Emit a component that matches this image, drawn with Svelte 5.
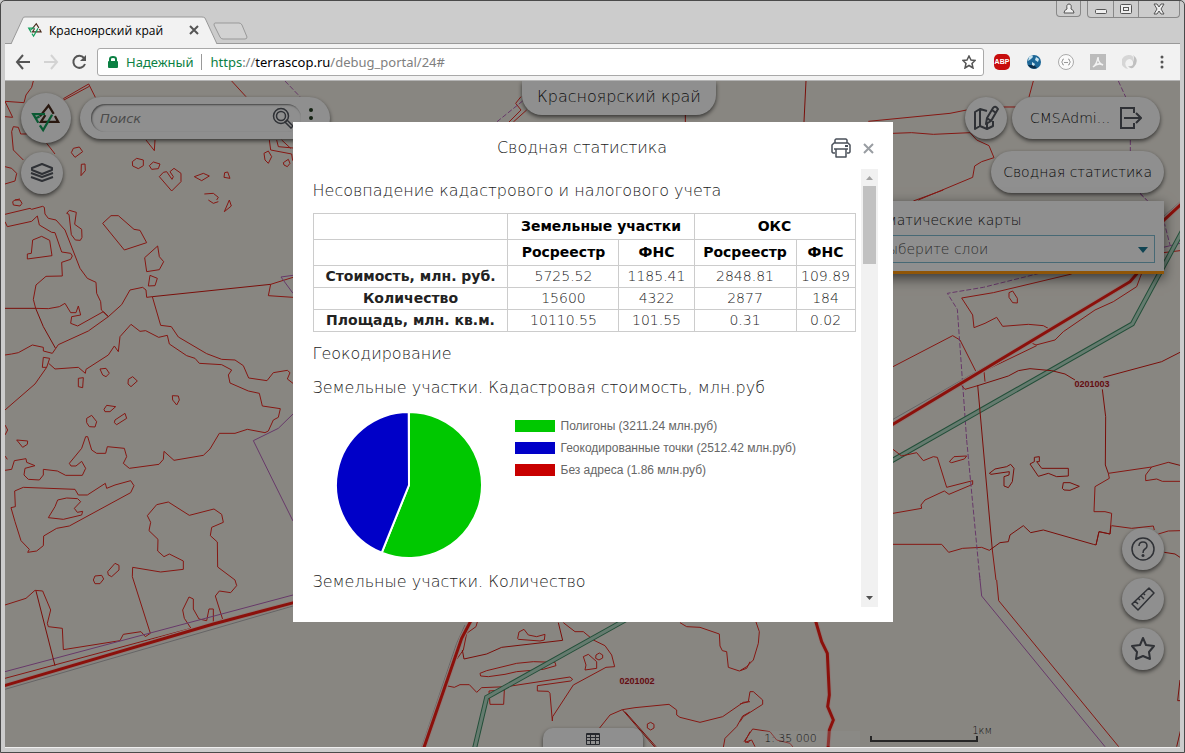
<script>
  const groups = [
    { title: "Земельные участки", cols: ["Росреестр", "ФНС"] },
    { title: "ОКС", cols: ["Росреестр", "ФНС"] }
  ];

  const rows = [
    { name: "Стоимость, млн. руб.", values: ["5725.52", "1185.41", "2848.81", "109.89"] },
    { name: "Количество", values: ["15600", "4322", "2877", "184"] },
    { name: "Площадь, млн. кв.м.", values: ["10110.55", "101.55", "0.31", "0.02"] }
  ];

  const parts = [
    { label: "Полигоны", value: 3211.24, color: "#00c800" },
    { label: "Геокодированные точки", value: 2512.42, color: "#0000c8" },
    { label: "Без адреса", value: 1.86, color: "#c80000" }
  ];

  const total = parts.reduce((sum, p) => sum + p.value, 0);

  function slice(index) {
    const before = parts.slice(0, index).reduce((sum, p) => sum + p.value, 0);
    const a = (before / total) * Math.PI * 2;
    const b = ((before + parts[index].value) / total) * Math.PI * 2;
    const large = b - a > Math.PI ? 1 : 0;
    const point = (t) => `${73 + 73 * Math.sin(t)} ${73 - 73 * Math.cos(t)}`;
    return `M73 73L${point(a)}A73 73 0 ${large} 1 ${point(b)}Z`;
  }

  // Cadastre lines, in thirds of a pixel from each tile's corner
  const tiles = [
    {
      x: 0,
      y: 0,
      thin: "M100 243L95 262L78 285L72 308L15 304L38 352L15 350M190 301L268 259M190 296L266 252L286 292M80 402L62 402L55 382L40 380L35 395L40 450L70 480M140 430L165 462M220 445L238 441L248 455L225 472L214 458ZM244 493L255 492L256 512L243 527ZM15 500L35 505L50 520L45 543L15 552M45 600L60 597M695 243L738 290M438 420L463 452L465 420M397 485L410 475L430 480L430 497L415 506L398 498ZM448 497L460 486L480 492L475 506L455 508ZM478 530L490 517L500 515L516 538L520 530L510 515L522 505L543 520L543 545L515 573ZM583 530L610 520L628 528L605 542ZM672 532L674 518L683 516L690 535ZM613 582L640 580L655 592L650 600M808 420L812 450L875 462L878 482M830 420L835 440L879 444M845 420L872 445M792 460L805 453L815 470L805 490L795 480ZM850 488L865 478L870 490L862 500L852 495Z",
      dash: "M855 243L900 290"
    },
    {
      x: 395,
      y: 0,
      thin: "M378 290L362 310L378 330L342 366M395 330L355 366",
      dark: "M871 345V366",
      dash: "M383 303L305 366"
    },
    {
      x: 790,
      y: 0,
      thin: "M235 364L480 340L530 330M640 321H685M730 243L717 291M309 400L365 398L430 403L540 398L560 420L597 437L612 473L575 485L554 498L548 532L385 600",
      dark: "M48 243L42 366",
      dash: "M985 243L1007 291M1021 420V455M1050 580L1070 600"
    },
    {
      x: 0,
      y: 200,
      thin: "M38 5L45 0L60 0L66 10L60 18L40 15ZM15 43L90 25L95 28L128 19L133 22L135 42L145 55L168 60L195 90L240 205L262 235L288 247L290 280L302 305L304 330L325 350M15 65L22 80L95 64L112 48L118 75L155 97L165 98L185 156L212 160L217 168L212 178L185 187L187 228L138 229L108 255L100 298L107 325M82 177L82 162L94 160L98 120L125 109L149 121L156 167ZM200 40L208 31L229 37L224 73L245 88L246 112L241 121L226 120L214 104L207 43ZM308 70L333 47L355 47L402 88L420 91L440 128L373 150ZM434 173L473 138L478 170L491 185L478 209L440 215ZM445 258L450 226L472 235L465 257ZM625 0L640 10L655 5M673 35L688 0L694 18ZM107 325L145 326L178 320L195 310L212 338L228 338L235 318L242 345L215 350L212 370L233 378L310 335M325 350L265 393L175 434L157 460L130 453L130 442L97 435L55 458L35 462L15 465M325 350L365 314L390 270L428 262L438 270L440 292L457 290M812 253L879 232M812 253L805 287L879 292M457 290L482 376L514 380L535 411L620 461L665 478L705 480L730 497L746 534L801 542L820 518L862 511L870 518L862 537L879 550M127 502L130 472L149 475L140 502ZM146 490L165 507L235 502L256 520L258 508L325 465L343 438L355 455L360 410L393 373L420 394L437 392L476 412L502 406L508 432L560 467L585 475L598 490L665 494L695 510L685 525L690 549L745 573L778 580L787 618L841 626L835 652L820 660L805 693L795 698L742 688L705 700L658 700L630 747L610 766L522 781L492 754L490 778L477 793L388 805L370 790L380 770L373 745L322 740L317 760L290 760L275 750L263 710L257 710L245 745L208 790L213 798L228 798L245 784L257 805L247 826L197 826L172 813L130 808L130 825L118 840L85 838L72 825L75 805L105 797L80 787L78 776L43 782L35 808L15 811M140 502L105 552L15 630M300 507L318 505L328 520L318 530L308 525ZM235 535L250 533L248 563L235 560ZM385 538L398 530L412 543L393 560L384 552ZM517 587L535 588L538 600L530 615L518 600ZM312 628L320 616L347 620L330 635L315 635ZM260 655L275 646L290 665L285 681L268 680L260 668ZM345 660L375 640L380 655L350 674L343 668ZM50 720L83 723L82 733L68 742ZM15 675L23 690L15 705M15 768L22 778",
      dark: "M15 325H107L130 380L166 444M310 335L325 350M457 290L812 253",
      purple: "M879 226L843 231L879 280M879 642L835 685L760 722L818 840L879 963"
    },
    {
      x: 0,
      y: 480,
      thin: "M33 83L46 80L44 33L70 22L225 28L235 45L262 45L316 10L320 25L345 15L392 2L402 17L392 38L208 138L170 145L131 168L130 197L110 213L83 217L88 208L63 182L45 125ZM145 113L165 80L173 60L200 54L233 56L242 65L223 85L232 97L248 94L245 105L190 118ZM573 445L553 415L548 390L567 351L580 357L580 387L597 417L620 422L627 387L640 387L640 430L668 418L646 348L658 333L692 338L710 317L705 300L653 261L652 186L631 167L635 142L670 127L665 103L642 87L568 106L505 66L470 74L442 107L452 127L447 152L474 178L473 213L492 230L508 222L550 243L550 268L482 276L398 262L397 290L451 460L436 470L423 455L370 463L360 482L190 509L187 445L145 440L142 430L152 390L128 333L105 331L78 355L15 375M280 300L285 288L305 286L311 297L300 311L285 311ZM323 275L345 250L357 256L357 270L335 290L325 285ZM15 595L573 445",
      dark: "M108 333L165 557",
      purple: "M15 575L879 345",
      road: "M10 618L640 432L884 367",
      verge: "M15 628L879 378"
    },
    {
      x: 300,
      y: 610,
      thin: "M532 36L528 50L500 70L490 120L470 148M653 85L657 66L672 58L685 75L710 80L735 73L733 90L720 93L655 88ZM790 38L825 65L850 65L880 90L915 107L935 135L944 170L918 172L820 225L758 320L757 333L750 250L745 244L712 243L712 227L812 213L818 208L810 201L620 230L545 233L530 247L508 224L480 224L463 232L443 228M540 190L560 182L650 160L700 155L765 157L768 167L730 178L650 185L615 193L565 200L542 198ZM567 243L613 240L611 283L570 283ZM850 140L865 133L890 155L890 175L855 180L858 165ZM888 135L898 129L908 135L908 144L897 150L887 145ZM898 355L930 315L967 299L1005 293L1107 283L1130 300L1130 315L1140 322L1200 337L1268 320L1330 277L1350 275M1042 342L1052 337L1062 343L1062 354L1052 360L1042 354ZM1140 38L1160 50L1200 52L1258 72L1260 108L1267 122L1280 125L1285 172L1318 183L1340 175L1350 155M1270 412L1275 385L1310 350L1328 318L1350 306M1350 365L1335 395L1345 398L1350 390",
      dark: "M487 120L492 147L560 132L605 112L788 91L775 38M967 299L1065 412M975 305L1068 410",
      road: "M514 30L485 85L370 418",
      verge: "M495 45L470 100L365 412",
      pipe: "M990 22L560 262L523 418"
    },
    {
      x: 740,
      y: 530,
      thin: "M48 276L58 305L55 340L40 390L20 410L0 422M0 522L25 515L30 485L40 485L68 510L68 523L10 560L0 575M12 635L38 597L90 605L110 630L150 640L158 650M15 637L35 630L45 650M770 150L776 212L1136 650",
      dark: "M1320 450L1313 512H1322M1322 600L1310 650",
      purple: "M718 130L725 198L1095 650",
      road: "M226 270L245 335L262 370L268 495L263 530L280 570L268 600L264 655"
    },
    {
      x: 880,
      y: 190,
      thin: "M100 33L190 0M850 188L900 182M575 252L340 308L245 324L278 375L282 413L315 400L350 382L368 409L445 403L490 407L510 418M387 308L398 303L412 325L412 339L398 338L387 322ZM785 250L770 290L700 335L645 360L550 425L525 450L468 465L457 460M470 467L312 543L315 575M39 530L218 437L240 450L287 543",
      purple: "M850 172L900 160",
      dash: "M780 10L805 35M852 95L870 165M478 250L310 292L202 310L232 358L260 750",
      road: "M906 40L850 92L770 252L750 275L34 706",
      verge: "M900 36L850 80M745 285L39 688",
      pipe: "M910 118L757 402L34 813"
    },
    {
      x: 885,
      y: 350,
      thin: "M633 585L642 545L675 552L680 490L660 485H627L630 410L673 385L670 370L800 351L850 337M800 351L782 375L782 392L815 387L832 394H885M680 527L740 535L805 528L808 540M820 552L850 543L885 542M230 107L240 118L278 107M24 298L50 318L95 308L115 332L145 320L157 322L185 412L263 392L263 403L192 433L178 423L120 450L108 465L110 475L24 490M193 335L207 320L245 318L238 327L200 338ZM24 583H170L191 607L233 595L290 592L313 601M322 600L333 690",
      dark: "M313 601L345 578L370 575L375 555L415 527L437 548L475 540L625 583L633 585L642 545L675 552L678 527M278 105L322 600M278 107L370 78L400 62L435 56L500 62L540 72L570 90M655 82L830 35L885 7M652 118L662 200L661 345L670 370M850 337L885 346M838 607L870 612L885 622M313 370L330 357L365 350L377 343L387 355L382 395L370 413L357 408L357 380L372 375L373 365L318 373ZM435 342L448 335L448 322L463 320L463 335L455 335L470 355H550V378L515 380L490 370L460 379ZM532 415L535 398L555 398L583 409L555 421L537 420Z",
      dash: "M245 270L285 690"
    }
  ];

  let query = $state("");
  let open = $state(true);
</script>

{#snippet logo()}
  <svg class="logo" viewBox="90 306 100 98" aria-hidden="true">
    <g fill="none" stroke-width="7">
      <path stroke="#4a2c1d" d="M121 351L148 317L164 343M168 350L178 368H124L138 347" />
      <path stroke="#12a05c" d="M137 344H100L116 371M121 379L131 394L159 346M108 357L120 351" />
    </g>
  </svg>
{/snippet}

<div class="window">
  <header class="titlebar">
    <div class="tab">
      <svg class="tab-shape" viewBox="0 0 206 28" preserveAspectRatio="none" aria-hidden="true">
        <path fill="#f2f2f2" stroke="#999" d="M0 28L12 2Q12 1 14 1H191Q193 1 194 2L206 28" />
      </svg>
      <span class="favicon">{@render logo()}</span>
      <span class="tab-name">Красноярский край</span>
      <button class="plain" aria-label="Закрыть вкладку">
        <svg width="10" height="10" viewBox="0 0 10 10"><path stroke="#555" stroke-width="2" d="M1 1L9 9M9 1L1 9" /></svg>
      </button>
    </div>
    <button class="plain new-tab" aria-label="Новая вкладка">
      <svg width="36" height="18" viewBox="0 0 36 18"><path fill="#d2d2d2" stroke="#999" d="M2 1H26Q28 1 29 3L34 15Q34 17 32 17H10Q8 17 7 15L1 3Q1 1 2 1Z" /></svg>
    </button>
    <div class="window-buttons">
      <button class="wb user" aria-label="Профиль">
        <svg width="12" height="12" viewBox="0 0 12 12"><path fill="#eee" stroke="#555" d="M4 6Q3 1 6 1T8 6Q11 7 11 10H1Q1 7 4 6Z" /></svg>
      </button>
      <div class="wb-group">
        <button class="wb" aria-label="Свернуть">
          <svg width="12" height="12" viewBox="0 0 12 12"><rect x=".5" y="6.5" width="11" height="4" rx="1" fill="#eee" stroke="#555" /></svg>
        </button>
        <button class="wb" aria-label="Развернуть">
          <svg width="12" height="12" viewBox="0 0 12 12"><g fill="#eee" stroke="#555"><rect x=".5" y="1.5" width="11" height="9" rx="1" /><rect x="3.5" y="4.5" width="5" height="3" /></g></svg>
        </button>
        <button class="wb wide" aria-label="Закрыть">
          <svg width="12" height="12" viewBox="0 0 12 12"><path fill="#eee" stroke="#555" d="M1 1H4L6 4L8 1H11L8 6L11 11H8L6 8L4 11H1L4 6Z" /></svg>
        </button>
      </div>
    </div>
  </header>

  <nav class="toolbar">
    <button class="plain" aria-label="Назад">
      <svg width="16" height="16" viewBox="0 0 16 16"><path fill="none" stroke="#555" stroke-width="2" d="M15 8H2M8 1L2 8L8 15" /></svg>
    </button>
    <button class="plain" aria-label="Вперёд">
      <svg width="16" height="16" viewBox="0 0 16 16"><path fill="none" stroke="#d3d3d3" stroke-width="2" d="M1 8H14M8 1L14 8L8 15" /></svg>
    </button>
    <button class="plain" aria-label="Обновить">
      <svg width="16" height="16" viewBox="0 0 16 16"><path fill="none" stroke="#555" stroke-width="2" d="M13 4A6 6 0 1 0 14 10" /><path fill="#555" d="M15 1V7H9Z" /></svg>
    </button>
    <div class="address">
      <svg width="10" height="12" viewBox="0 0 10 12" aria-hidden="true"><rect y="5" width="10" height="7" rx="1" fill="#0b8043" /><path fill="none" stroke="#0b8043" stroke-width="2" d="M2 6V3A3 2 0 0 1 8 3V6" /></svg>
      <span class="secure">Надежный</span>
      <div class="url" role="textbox" tabindex="0" contenteditable="true" spellcheck="false" aria-label="Адрес"><span class="scheme">https</span>://<span class="host">terrascop.ru</span>/debug_portal/24#</div>
      <button class="plain" aria-label="В закладки">
        <svg width="14" height="14" viewBox="0 0 14 14"><path fill="none" stroke="#555" stroke-width="1.5" d="M7 1L9 5L13 5.5L10 8.5L11 13L7 10.5L3 13L4 8.5L1 5.5L5 5Z" /></svg>
      </button>
    </div>
    <div class="extensions">
      <button class="plain" aria-label="Adblock Plus">
        <span class="abp">ABP</span>
      </button>
      <button class="plain" aria-label="Глобус">
        <svg width="16" height="16" viewBox="0 0 16 16"><circle cx="8" cy="8" r="7" fill="#1d6797" /><path fill="#0b2d49" d="M2 11Q5 16 11 14L8 11Z" /><path fill="#c9e4f0" d="M3 3L6 1L7 3L5 5L2 7ZM10 3L13 5L12 8L9 6ZM6 8L9 10L8 12L6 11Z" /></svg>
      </button>
      <button class="plain" aria-label="JSON">
        <svg width="16" height="16" viewBox="0 0 16 16"><circle cx="8" cy="8" r="7.5" fill="#fafafa" stroke="#aaa" /><path fill="none" stroke="#999" d="M6 5Q4 5 4.500 7L3.500 8L4.500 9Q4 11 6 11M10 5Q12 5 11.500 7L12.500 8L11.500 9Q12 11 10 11M6 8.500H10" /></svg>
      </button>
      <button class="plain" aria-label="PDF">
        <svg width="16" height="16" viewBox="0 0 16 16"><rect width="16" height="16" fill="#bcbcbc" /><path fill="none" stroke="#f2f2f2" stroke-width="1.500" d="M3 13Q7 10 8 3Q8 9 13 11Q8 8 3 13" /></svg>
      </button>
      <button class="plain" aria-label="Расширение">
        <svg width="16" height="16" viewBox="0 0 16 16"><path fill="#d6d6d6" d="M7 1A7 7 0 0 0 6 15Q1 10 5 6Q9 3 11 8Q13 1 7 1Z" /><path fill="#c0c0c0" d="M11 1Q18 6 12 13Q9 16 6 12Q12 13 11 8Q13 4 11 1Z" /></svg>
      </button>
      <button class="plain" aria-label="Меню">
        <svg width="16" height="16" viewBox="0 0 16 16"><g fill="#555"><circle cx="8" cy="3" r="1.500" /><circle cx="8" cy="8" r="1.500" /><circle cx="8" cy="13" r="1.500" /></g></svg>
      </button>
    </div>
  </nav>

  <main class="map">
    <svg class="canvas" viewBox="5 81 1175 667" preserveAspectRatio="xMinYMin slice" aria-hidden="true">
      {#each tiles as tile}
        <g transform="translate({tile.x} {tile.y}) scale(0.33333)">
          <path class="thin" d={tile.thin} />
          {#if tile.purple}<path class="purple" d={tile.purple} />{/if}
          {#if tile.dash}<path class="purple dash" d={tile.dash} />{/if}
          {#if tile.dark}<path class="dark" d={tile.dark} />{/if}
          {#if tile.verge}<path class="verge" d={tile.verge} />{/if}
          {#if tile.road}
            <path class="casing" d={tile.road} />
            <path class="road" d={tile.road} />
          {/if}
          {#if tile.pipe}
            <path class="pipe-edge" d={tile.pipe} />
            <path class="pipe" d={tile.pipe} />
          {/if}
        </g>
      {/each}
      <text class="zone" x="1092" y="387">0201003</text>
      <text class="zone" x="637" y="684">0201002</text>
    </svg>

    <div class="cluster left">
      <div class="row">
        <button class="round big" aria-label="TerraScop">{@render logo()}</button>
        <div class="search">
          <div class="field">
            <input type="text" placeholder="Поиск" aria-label="Поиск" bind:value={query} />
            <svg width="22" height="22" viewBox="0 0 22 22" aria-hidden="true"><g fill="none" stroke="#545860" stroke-width="1.500"><circle cx="9" cy="9" r="7.500" /><circle cx="9" cy="9" r="4.500" /><path d="M13 15L15 13L21 19L19 21Z" /></g></svg>
          </div>
          <button class="plain" aria-label="Параметры поиска">
            <svg width="6" height="22" viewBox="0 0 6 22"><g fill="#243d22"><circle cx="3" cy="3" r="2" /><circle cx="3" cy="11" r="2" /><circle cx="3" cy="19" r="2" /></g></svg>
          </button>
        </div>
      </div>
      <button class="round" aria-label="Слои">
        <svg width="24" height="22" viewBox="0 0 24 22"><g fill="none" stroke="#545860" stroke-width="2" stroke-linejoin="round"><path d="M12 2L22 6V8L12 12L2 8V6Z" /><path d="M1 11L12 15L23 11M1 15L12 19L23 15" /></g></svg>
      </button>
    </div>

    <h1 class="region">Красноярский край</h1>

    <div class="cluster right">
      <div class="row account">
        <button class="round" aria-label="Редактировать карту">
          <svg width="26" height="26" viewBox="0 0 26 26"><g fill="none" stroke="#545860" stroke-width="2" stroke-linejoin="round"><path d="M14 6L7 4L2 7V24L7 21L14 24L20 21V16M7 4V21M14 17V24M13 19L14 13L20 3Q22 0 25 4L18 16ZM19 5L23 8M14 13L18 16" /></g></svg>
        </button>
        <button class="pill user-pill">
          <span>CMSAdmi...</span>
          <svg width="22" height="22" viewBox="0 0 22 22" aria-hidden="true"><path fill="none" stroke="#545860" stroke-width="2" d="M14 6V1H1V21H14V16M4 11H20M16 6L21 11L16 16" /></svg>
        </button>
      </div>
      <button class="pill" onclick={() => (open = true)}>Сводная статистика</button>
      <section class="themes">
        <label for="layers">Тематические карты</label>
        <div class="select">
          <select id="layers">
            <option>Выберите слои</option>
          </select>
          <svg width="10" height="6" viewBox="0 0 10 6" aria-hidden="true"><path fill="#1e7a94" d="M0 0H10L5 6Z" /></svg>
        </div>
      </section>
    </div>

    <div class="cluster tools">
      <button class="round" aria-label="Помощь">
        <svg width="24" height="24" viewBox="0 0 24 24"><g fill="none" stroke="#545860" stroke-width="1.500"><circle cx="12" cy="12" r="11" /><path d="M8 9Q8 5 12 5T16 9Q16 11 14 12T12 16" /></g><circle cx="12" cy="18.500" r="1.500" fill="#545860" /></svg>
      </button>
      <button class="round" aria-label="Линейка">
        <svg width="24" height="24" viewBox="0 0 24 24"><path fill="none" stroke="#545860" stroke-width="1.500" stroke-linejoin="round" d="M18 1L23 6L7 23L1 17ZM4 14L7 17M7 11L9 13M10 9L13 12M12 6L14 8" /></svg>
      </button>
      <button class="round" aria-label="Избранное">
        <svg width="24" height="24" viewBox="0 0 24 24"><path fill="none" stroke="#545860" stroke-width="2" stroke-linejoin="round" d="M12 1L15 8L23 9L18 15L19 22L12 19L5 22L6 15L1 9L9 8Z" /></svg>
      </button>
    </div>

    <button class="drawer" aria-label="Таблица">
      <svg width="14" height="12" viewBox="0 0 14 12"><rect width="14" height="12" rx="1" fill="#444850" /><path fill="#fff" d="M1 2H4V4H1ZM5 2H9V4H5ZM10 2H13V4H10ZM1 5H4V7H1ZM5 5H9V7H5ZM10 5H13V7H10ZM1 8H4V11H1ZM5 8H9V11H5ZM10 8H13V11H10Z" /></svg>
    </button>

    <div class="scale">
      <span class="ratio">1: 35 000</span>
      <span class="ruler"></span>
      <span class="distance">1км</span>
    </div>

    {#if open}
      <div class="overlay">
        <div class="modal" role="dialog" aria-labelledby="modal-title">
          <header class="modal-head">
            <h2 id="modal-title">Сводная статистика</h2>
            <button class="plain" aria-label="Печать">
              <svg width="20" height="20" viewBox="0 0 20 20"><g fill="none" stroke="#4a505a" stroke-width="1.500" stroke-linejoin="round"><path d="M4 5V2L5 1H15L16 2V5M4 15H2L1 14V7L3 5H17L19 7V14L18 15H16" /><path d="M5 11H15V19H5ZM3 11H17" /></g><path fill="#4a505a" d="M14 7H17V9H14Z" /></svg>
            </button>
            <button class="plain close" aria-label="Закрыть" onclick={() => (open = false)}>
              <svg width="11" height="11" viewBox="0 0 11 11"><path stroke="#999da2" stroke-width="2" d="M1 1L10 10M10 1L1 10" /></svg>
            </button>
          </header>
          <div class="modal-body">
            <div class="content">
              <h3>Несовпадение кадастрового и налогового учета</h3>
              <table>
                <colgroup>
                  <col />
                  <col class="c-land" />
                  <col class="c-land-tax" />
                  <col class="c-build" />
                  <col class="c-build-tax" />
                </colgroup>
                <thead>
                  <tr>
                    <td></td>
                    {#each groups as group}
                      <th colspan={group.cols.length}>{group.title}</th>
                    {/each}
                  </tr>
                  <tr>
                    <td></td>
                    {#each groups as group}
                      {#each group.cols as col}
                        <th>{col}</th>
                      {/each}
                    {/each}
                  </tr>
                </thead>
                <tbody>
                  {#each rows as row}
                    <tr>
                      <th scope="row">{row.name}</th>
                      {#each row.values as value}
                        <td>{value}</td>
                      {/each}
                    </tr>
                  {/each}
                </tbody>
              </table>
              <h3>Геокодирование</h3>
              <h3>Земельные участки. Кадастровая стоимость, млн.руб</h3>
              <div class="chart">
                <svg width="146" height="146" viewBox="0 0 146 146" aria-hidden="true">
                  {#each parts as part, i}
                    <path d={slice(i)} fill={part.color} stroke="#fff" stroke-width="2" />
                  {/each}
                </svg>
                <ul>
                  {#each parts as part}
                    <li>
                      <span class="swatch" style="background: {part.color}"></span>
                      {part.label} ({part.value} млн.руб)
                    </li>
                  {/each}
                </ul>
              </div>
              <h3>Земельные участки. Количество</h3>
            </div>
            <div class="scrollbar" aria-hidden="true">
              <svg width="7" height="4" viewBox="0 0 7 4"><path fill="#a3a3a3" d="M0 4L3.500 0L7 4Z" /></svg>
              <div class="thumb"></div>
              <svg width="7" height="4" viewBox="0 0 7 4"><path fill="#505050" d="M0 0H7L3.500 4Z" /></svg>
            </div>
          </div>
        </div>
      </div>
    {/if}
  </main>
</div>

<style>
  :global(body) {
    background: #ccc;
  }

  .window {
    box-sizing: border-box;
    min-height: 100vh;
    display: flex;
    flex-direction: column;
    padding: 0 4px 4px;
    background: #ccc;
    border: 1px solid #4a4a4a;
    border-radius: 5px 5px 0 0;
    font-family: "DejaVu Sans", Verdana, sans-serif;
    font-weight: 200;
    color: #222;
  }

  button,
  input,
  select {
    font: inherit;
    color: inherit;
  }

  .plain {
    display: flex;
    padding: 0;
    border: none;
    background: none;
    cursor: pointer;
  }

  /* browser frame */
  .titlebar {
    display: flex;
    align-items: flex-end;
    height: 42px;
    padding-left: 6px;
    border-bottom: 1px solid #999;
  }

  .tab {
    position: relative;
    box-sizing: border-box;
    display: flex;
    align-items: center;
    width: 206px;
    height: 28px;
    margin-bottom: -1px;
    padding: 0 18px 0 16px;
    font: 12px "Open Sans", "Noto Sans", sans-serif;
    color: #000;
  }

  .tab-shape {
    position: absolute;
    inset: 0;
    width: 100%;
    height: 100%;
  }

  .tab > :not(.tab-shape) {
    position: relative;
  }

  .favicon {
    display: flex;
    width: 16px;
    margin-right: 6px;
  }

  .logo {
    width: 100%;
  }

  .tab-name {
    flex: 1;
  }

  .new-tab {
    margin: 0 0 3px -4px;
  }

  .window-buttons {
    display: flex;
    gap: 6px;
    align-self: flex-start;
    margin-left: auto;
  }

  .wb-group {
    display: flex;
    border: 1px solid #888;
    border-top: none;
    border-radius: 0 0 4px 4px;
  }

  .wb {
    display: flex;
    align-items: center;
    justify-content: center;
    width: 25px;
    height: 16px;
    padding: 0;
    border: none;
    background: none;
  }

  .wb + .wb {
    border-left: 1px solid #888;
  }

  .wb.user {
    border: 1px solid #888;
    border-top: none;
    border-radius: 0 0 4px 4px;
  }

  .wb.wide {
    width: 41px;
  }

  .toolbar {
    display: flex;
    align-items: center;
    gap: 12px;
    height: 36px;
    padding: 0 10px;
    background: #f2f2f2;
    border-bottom: 1px solid #b4b4b4;
  }

  .address {
    flex: 1;
    box-sizing: border-box;
    display: flex;
    align-items: center;
    gap: 8px;
    height: 28px;
    margin: 0 -2px;
    padding: 0 7px 0 10px;
    background: #fff;
    border: 1px solid #a9a9a9;
    border-radius: 3px;
    font: 13px "Noto Sans", sans-serif;
  }

  .secure {
    padding-right: 8px;
    border-right: 1px solid #999;
    line-height: 16px;
    color: #0b8043;
  }

  .url {
    flex: 1;
    color: #808080;
    outline: none;
  }

  .scheme {
    color: #0b8043;
  }

  .host {
    color: #000;
  }

  .extensions {
    display: flex;
    align-items: center;
    gap: 16px;
  }

  .abp {
    width: 16px;
    border-radius: 5px;
    background: #c70d0d;
    font: bold 7px/16px "Liberation Sans", sans-serif;
    text-align: center;
    color: #fff;
  }

  /* map */
  .map {
    position: relative;
    flex: 1;
    overflow: hidden;
    background: #f3efe6;
    border-bottom: 1px solid #eee;
  }

  .canvas {
    position: absolute;
    inset: 0;
    width: 100%;
    height: 100%;
  }

  .canvas path {
    fill: none;
    vector-effect: non-scaling-stroke;
  }

  .thin {
    stroke: #ee2a22;
    stroke-width: 1px;
  }

  .dark {
    stroke: #d81a12;
    stroke-width: 1px;
  }

  .purple {
    stroke: #b765bc;
    stroke-width: 1px;
  }

  .dash {
    stroke-dasharray: 5 2;
  }

  .verge {
    stroke: #b5b3b5;
    stroke-width: 1px;
  }

  .casing {
    stroke: #fbdcd6;
    stroke-width: 5px;
  }

  .road {
    stroke: #f81e14;
    stroke-width: 3px;
  }

  .pipe-edge {
    stroke: #3f8c66;
    stroke-width: 5px;
  }

  .pipe {
    stroke: #b4dcc6;
    stroke-width: 3px;
  }

  .zone {
    font: bold 9px "Liberation Sans", sans-serif;
    text-anchor: middle;
    fill: #b01820;
    stroke: #f7e6e6;
    stroke-width: 2px;
    paint-order: stroke;
  }

  .cluster {
    position: absolute;
    display: flex;
    flex-direction: column;
  }

  .left {
    top: 12px;
    left: 16px;
    gap: 9px;
  }

  .right {
    top: 16px;
    right: 16px;
    align-items: flex-end;
  }

  .tools {
    right: 16px;
    bottom: 77px;
    gap: 8px;
  }

  .row {
    display: flex;
    align-items: center;
    gap: 9px;
  }

  .account {
    gap: 5px;
    margin: 0 4px 12px 0;
  }

  .round,
  .pill,
  .search,
  .drawer,
  .region {
    background: #fff;
    border: none;
    box-shadow: 0 2px 4px rgba(0, 0, 0, 0.6);
  }

  .round {
    display: flex;
    align-items: center;
    justify-content: center;
    width: 42px;
    height: 42px;
    padding: 0;
    border-radius: 50%;
  }

  .round.big {
    width: 50px;
    height: 50px;
    padding: 9px;
  }

  .search {
    box-sizing: border-box;
    display: flex;
    align-items: center;
    gap: 7px;
    width: 250px;
    height: 42px;
    padding: 0 16px 0 11px;
    border-radius: 21px;
  }

  .field {
    flex: 1;
    display: flex;
    align-items: center;
    height: 28px;
    padding: 0 7px 0 9px;
    border-radius: 14px;
    box-shadow: inset 1px 1px 2px #777;
  }

  .field input {
    flex: 1;
    min-width: 0;
    padding: 0;
    border: none;
    background: none;
    font-size: 13px;
    outline: none;
  }

  .field input::placeholder {
    font-style: italic;
    color: #888;
    opacity: 1;
  }

  .region {
    position: absolute;
    top: 0;
    left: 44%;
    margin: 0;
    padding: 0 15px 2px;
    border-radius: 0 0 20px 20px;
    font-size: 16px;
    font-weight: inherit;
    line-height: 32px;
  }

  .pill {
    height: 42px;
    padding: 0 12px;
    border-radius: 21px;
    font-size: 14px;
    color: #111;
  }

  .user-pill {
    display: flex;
    align-items: center;
    justify-content: space-between;
    width: 148px;
    padding: 0 18px;
  }

  .themes {
    box-sizing: border-box;
    width: 304px;
    margin-top: 8px;
    padding: 8px 9px;
    background: #fff;
    border-bottom: 3px solid #ff980e;
    box-shadow: 0 4px 12px rgba(0, 0, 0, 0.6);
    font-size: 14px;
  }

  .themes label {
    display: block;
    line-height: 22px;
  }

  .select {
    position: relative;
    margin-top: 4px;
  }

  .select select {
    box-sizing: border-box;
    width: 100%;
    height: 28px;
    padding: 0 8px;
    appearance: none;
    background: none;
    border: 1px solid #7fbcd0;
    color: #555;
  }

  .select svg {
    position: absolute;
    top: 12px;
    right: 7px;
    pointer-events: none;
  }

  .drawer {
    position: absolute;
    bottom: 0;
    left: calc(50% - 50px);
    display: flex;
    align-items: center;
    justify-content: center;
    width: 100px;
    height: 19px;
    padding: 2px 0 0;
    border-radius: 10px 10px 0 0;
  }

  .scale {
    position: absolute;
    right: 188px;
    bottom: 1px;
    display: flex;
    align-items: flex-end;
    font-size: 11px;
    line-height: 15px;
  }

  .ratio {
    box-sizing: border-box;
    width: 100px;
    margin-right: 10px;
    padding-left: 4px;
    background: rgba(255, 255, 255, 0.3);
  }

  .ruler {
    width: 104px;
    height: 4px;
    margin-bottom: 4px;
    border: 2px solid #444;
    border-top: none;
  }

  .distance {
    margin: 0 0 8px -6px;
    font-size: 10px;
  }

  /* dialog */
  .overlay {
    position: absolute;
    inset: 0;
    display: flex;
    align-items: flex-start;
    justify-content: center;
    padding-top: 41px;
    background: rgba(0, 0, 0, 0.44);
  }

  .modal {
    box-sizing: border-box;
    width: 600px;
    max-width: 100%;
    padding-bottom: 15px;
    background: #fff;
  }

  .modal-head {
    box-sizing: border-box;
    display: flex;
    align-items: center;
    height: 47px;
    padding: 5px 19px 0 41px;
  }

  .modal-head h2 {
    flex: 1;
    margin: 0;
    font-size: 16px;
    font-weight: inherit;
    line-height: 22px;
    text-align: center;
  }

  .close {
    margin-left: 12px;
  }

  .modal-body {
    display: flex;
    gap: 5px;
    height: 438px;
    padding: 0 15px 0 20px;
  }

  .content {
    flex: 1;
    display: flex;
    flex-direction: column;
    gap: 10px;
    padding-top: 10px;
    overflow: hidden;
  }

  .content h3 {
    margin: 0;
    font-size: 16px;
    font-weight: inherit;
    line-height: 24px;
    white-space: nowrap;
  }

  table {
    width: 100%;
    table-layout: fixed;
    border-collapse: collapse;
    font-size: 14px;
    line-height: 21px;
    text-align: center;
  }

  .c-land {
    width: 111px;
  }

  .c-land-tax {
    width: 75px;
  }

  .c-build {
    width: 102px;
  }

  .c-build-tax {
    width: 59px;
  }

  th,
  td {
    padding: 0;
    border: 1px solid #ccc;
    white-space: nowrap;
  }

  thead tr {
    height: 26px;
  }

  thead th {
    color: #000;
  }

  .chart {
    display: flex;
    gap: 33px;
    padding: 2px 0 2px 23px;
  }

  .chart ul {
    display: flex;
    flex-direction: column;
    gap: 10px;
    margin: 0;
    padding: 8px 0 0;
    list-style: none;
    font: 12px/12px "Liberation Sans", Arial, sans-serif;
    color: #666;
  }

  .chart li {
    display: flex;
    align-items: center;
    gap: 6px;
  }

  .swatch {
    width: 40px;
    height: 12px;
  }

  .scrollbar {
    display: flex;
    flex-direction: column;
    align-items: center;
    width: 17px;
    padding: 7px 0;
    box-sizing: border-box;
    background: #f1f1f1;
  }

  .thumb {
    width: 13px;
    height: 78px;
    margin: 6px 0 auto;
    background: #c1c1c1;
  }
</style>
